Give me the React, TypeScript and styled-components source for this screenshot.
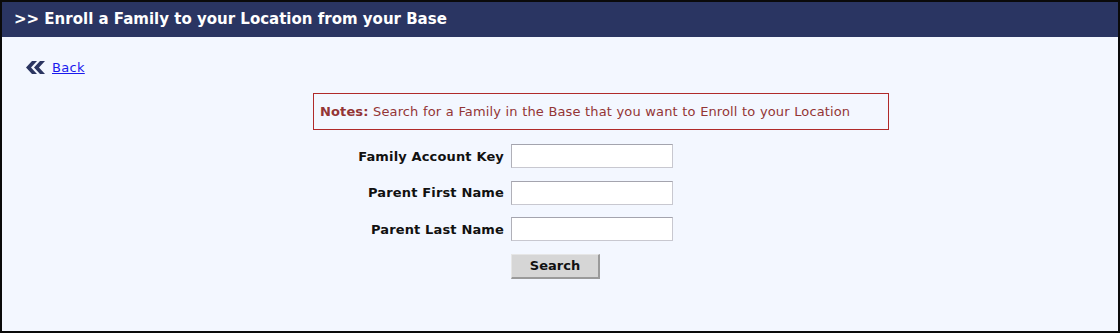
import React from 'react'
import styled, { createGlobalStyle } from 'styled-components'

const Global = createGlobalStyle`
  html, body { margin: 0; padding: 0; background: #ffffff; }
  body { font-family: "DejaVu Sans", Verdana, sans-serif; }
`

const fields = ['Family Account Key', 'Parent First Name', 'Parent Last Name']

const BackIcon = () => (
    <svg width="21" height="13" viewBox="0 0 21 13">
        <polygon points="7,0 12,0 6,6.5 12,13 7,13 1,6.5" fill="#2b3561" />
        <polygon points="15,0 20,0 14,6.5 20,13 15,13 9,6.5" fill="#2b3561" />
    </svg>
)

const App = () => {
    return (
        <Frame>
            <Global />
            <Header>&gt;&gt; Enroll a Family to your Location from your Base</Header>
            <Body>
                <BackRow>
                    <BackIcon />
                    <BackLink href="#">Back</BackLink>
                </BackRow>
                <Note><b>Notes:</b> Search for a Family in the Base that you want to Enroll to your Location</Note>
                <Form>
                    {fields.map(f => (
                        <React.Fragment key={f}>
                            <Label>{f}</Label>
                            <Input type="text" />
                        </React.Fragment>
                    ))}
                    <span />
                    <Button type="button">Search</Button>
                </Form>
            </Body>
        </Frame>
    )
}

export default App

const Frame = styled.div`
    width: 1120px;
    height: 333px;
    box-sizing: border-box;
    border: 2px solid #0a0a0a;
    background: #f3f7ff;
    display: flex;
    flex-direction: column;
`

const Header = styled.div`
    height: 35px;
    background: #2a3562;
    color: #ffffff;
    font-weight: bold;
    font-size: 15px;
    line-height: 35px;
    padding-left: 12px;
`

const Body = styled.div`
    padding: 21px 0 0 0;
`

const BackRow = styled.div`
    display: flex;
    align-items: center;
    gap: 6px;
    padding-left: 23px;
    height: 18px;
`

const BackLink = styled.a`
    color: #1a1aee;
    font-size: 13px;
    letter-spacing: 0.3px;
    text-decoration: underline;
`

const Note = styled.div`
    width: 576px;
    height: 37px;
    box-sizing: border-box;
    margin: 17px 0 0 311px;
    border: 1px solid #b02a2a;
    color: #933535;
    font-size: 13px;
    letter-spacing: 0.12px;
    word-spacing: 0.3px;
    line-height: 35px;
    padding-left: 6px;
`

const Form = styled.div`
    display: grid;
    grid-template-columns: 502px 162px;
    column-gap: 7px;
    row-gap: 12.5px;
    margin-top: 14px;
    align-items: center;
`

const Label = styled.label`
    text-align: right;
    font-weight: bold;
    font-size: 13px;
    letter-spacing: 0.15px;
    color: #111;
`

const Input = styled.input`
    width: 162px;
    height: 24px;
    box-sizing: border-box;
    background: #ffffff;
    border: 1px solid #c8c8d0;
    border-top-color: #a4a4ae;
    border-left-color: #b0b0b8;
    margin: 0;
    padding: 2px 4px;
    font-family: inherit;
    font-size: 13px;
`

const Button = styled.button`
    width: 89px;
    height: 25px;
    box-sizing: border-box;
    background: #d6d6d6;
    border: none;
    border-right: 2px solid #9a9a9a;
    border-bottom: 2px solid #9a9a9a;
    border-top: 1px solid #e6e6e6;
    border-left: 1px solid #e6e6e6;
    font-family: inherit;
    font-weight: bold;
    font-size: 13px;
    color: #111;
    padding: 0;
`
